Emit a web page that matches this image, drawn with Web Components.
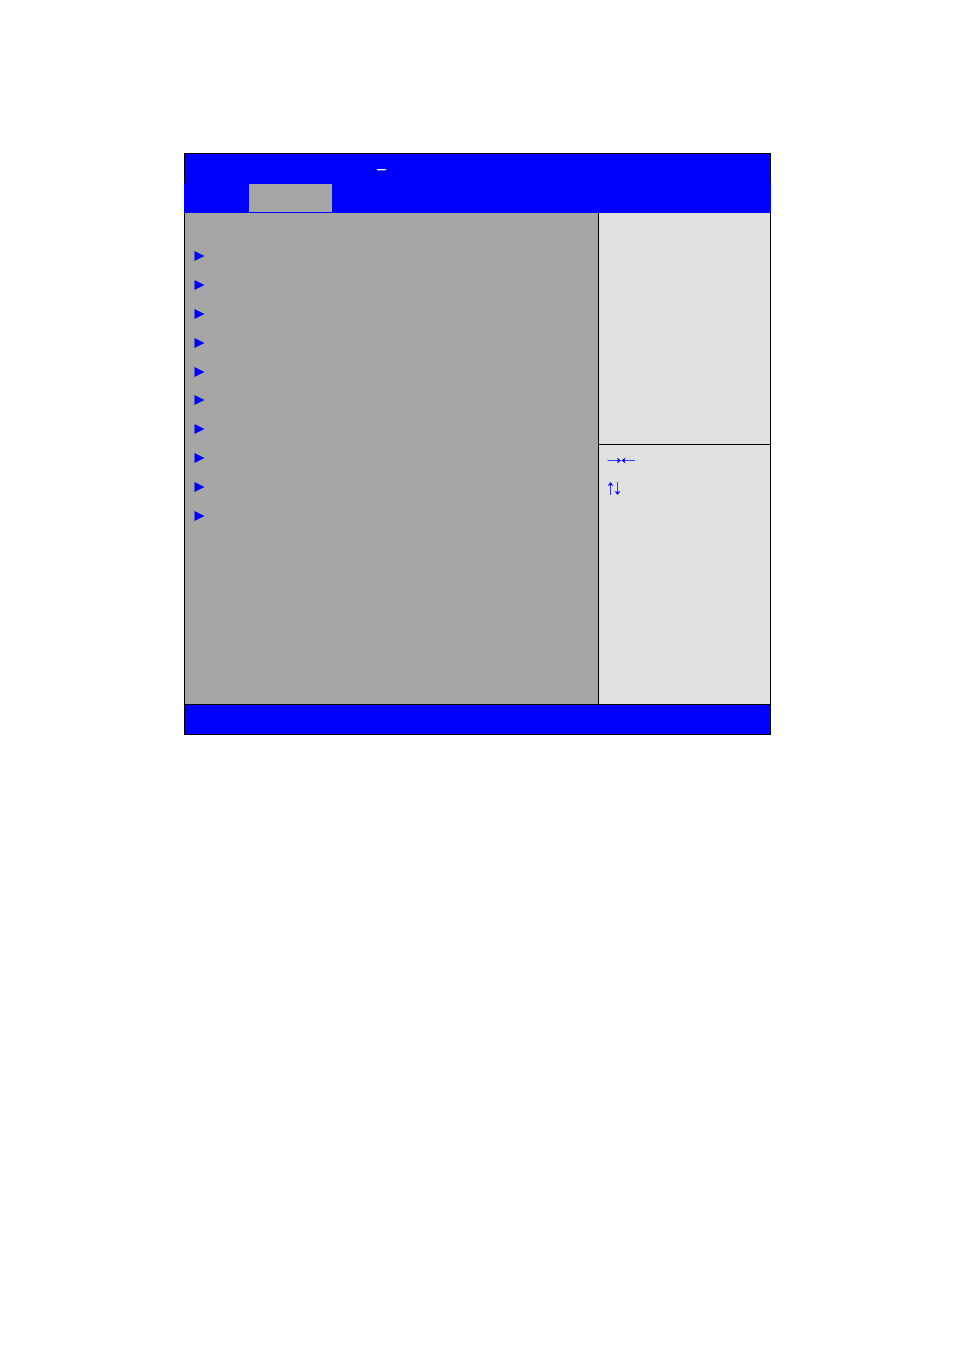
<!DOCTYPE html>
<html lang="en">
<head>
<meta charset="utf-8">
<title>Setup Utility</title>
<style>
    body {
        margin: 0;
        padding: 153px 183px 0 184px;
        background: white;
        font-family: "Liberation Sans", Arial, sans-serif;
        font-size: 16px;
        --blue: #0000ff;
        --grey: #a6a6a6;
        --light: #e0e0e0;
    }
</style>
</head>
<body>
<bios-screen>
    <bios-title slot="title">–</bios-title>
    <bios-tabs slot="tabs"></bios-tabs>
    <bios-menu slot="main"></bios-menu>
    <bios-keys slot="keys"></bios-keys>
</bios-screen>

<script>
class BiosElement extends HTMLElement {

    constructor() {
        super();
        this.attachShadow({ mode: "open" });
    }

    connectedCallback() {
        const template = document.createElement("template");
        template.innerHTML = this.getStyle() + this.getTemplate();
        this.shadowRoot.appendChild(template.content.cloneNode(true));
    }
}

class BiosScreen extends BiosElement {

    getTemplate() {
        return /*html*/ `
            <header>
                <slot name="title"></slot>
                <slot name="tabs"></slot>
            </header>
            <div class="body">
                <main><slot name="main"></slot></main>
                <aside>
                    <section class="help"></section>
                    <section class="keys"><slot name="keys"></slot></section>
                </aside>
            </div>
            <footer></footer>
        `;
    }

    getStyle() {
        return /*html*/ `
        <style>
            * { box-sizing: border-box; }
            :host { display: block; }
            .body {
                display: flex;
                min-height: 491px;
                border: solid black;
                border-width: 0 1px;
            }
            main {
                flex: 1;
                background: var(--grey);
            }
            aside {
                display: flex;
                flex-direction: column;
                width: 172px;
                border-left: 1px solid black;
                background: var(--light);
            }
            .help {
                height: 232px;
                border-bottom: 1px solid black;
            }
            .keys { flex: 1; }
            footer {
                height: 31px;
                border: 1px solid black;
                background: var(--blue);
            }
        </style>
        `;
    }
}
customElements.define("bios-screen", BiosScreen);

class BiosTitle extends BiosElement {

    getTemplate() {
        return /*html*/ `<slot></slot>`;
    }

    getStyle() {
        return /*html*/ `
        <style>
            :host {
                display: block;
                box-sizing: border-box;
                height: 30px;
                padding-left: 192px;
                border: solid black;
                border-width: 1px 1px 0;
                background: var(--blue);
                color: white;
                line-height: 29px;
            }
        </style>
        `;
    }
}
customElements.define("bios-title", BiosTitle);

class BiosTabs extends BiosElement {

    getTemplate() {
        return /*html*/ `
            <nav>
                <button type="button" aria-label="Advanced" aria-current="page"></button>
            </nav>
        `;
    }

    getStyle() {
        return /*html*/ `
        <style>
            :host {
                display: block;
                background: var(--blue);
            }
            nav {
                display: flex;
                padding: 1px 0 1px 65px;
            }
            button {
                width: 83px;
                height: 28px;
                padding: 0;
                border: 0;
                background: var(--grey);
            }
        </style>
        `;
    }
}
customElements.define("bios-tabs", BiosTabs);

class BiosMenu extends BiosElement {

    getTemplate() {
        const item = `
            <li>
                <button type="button" aria-label="Open submenu">
                    <svg width="11" height="10" viewBox="0 0 11 10"><path d="M.5 0 10.5 5 .5 10z"/></svg>
                </button>
            </li>`;
        return /*html*/ `<ul>${item.repeat(10)}</ul>`;
    }

    getStyle() {
        return /*html*/ `
        <style>
            :host { display: block; }
            ul {
                display: flex;
                flex-direction: column;
                height: 288px;
                margin: 0;
                padding: 29px 9px;
                list-style: none;
            }
            li {
                display: flex;
                flex: 1;
            }
            button {
                display: flex;
                align-items: center;
                padding: 0;
                border: 0;
                background: none;
            }
            svg { fill: var(--blue); }
        </style>
        `;
    }
}
customElements.define("bios-menu", BiosMenu);

class BiosKeys extends BiosElement {

    getTemplate() {
        return /*html*/ `
            <svg width="28" height="29" role="img" aria-label="Right and left arrow keys">
                <path class="line" d="M.5 15.5H13M15 15.5H28"/>
                <path class="head" d="M10 12.5 14 15.5 10 18.5 11 15.5zM18.5 12.5 14.5 15.5 18.5 18.5 17.5 15.5z"/>
            </svg>
            <svg width="28" height="29" role="img" aria-label="Up and down arrow keys">
                <path class="line" d="M3.5 9V21M10.5 8V20"/>
                <path class="head" d="M.5 12 3.5 8 6.5 12 3.5 11zM7.5 17 10.5 21 13.5 17 10.5 18z"/>
            </svg>
        `;
    }

    getStyle() {
        return /*html*/ `
        <style>
            :host {
                display: flex;
                flex-direction: column;
                padding: 0 8px;
            }
            .line {
                stroke: var(--blue);
                stroke-opacity: .75;
            }
            .head { fill: var(--blue); }
        </style>
        `;
    }
}
customElements.define("bios-keys", BiosKeys);
</script>
</body>
</html>
